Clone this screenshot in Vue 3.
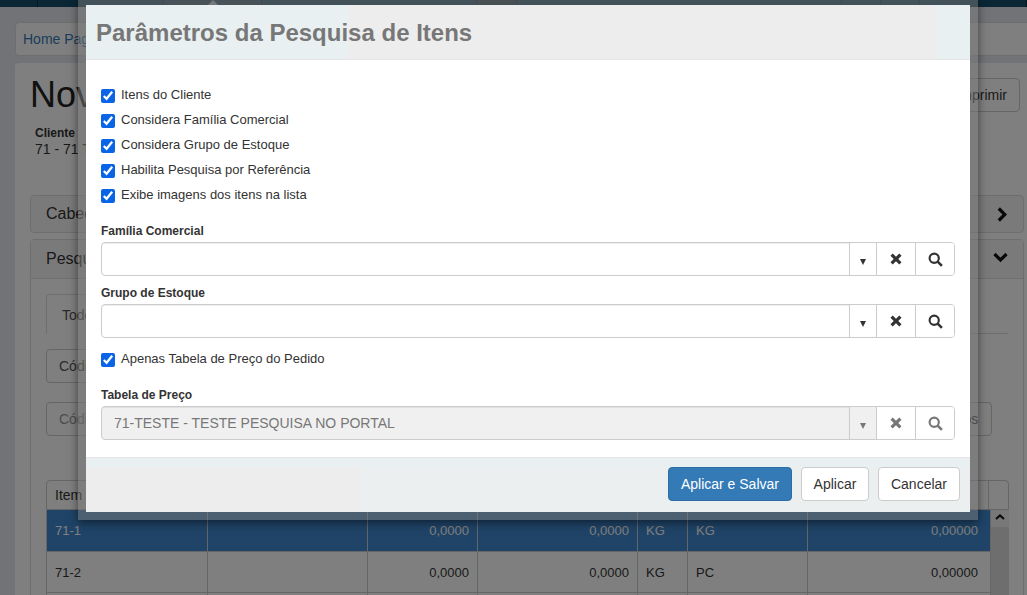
<script setup>
const nav = [
  { w: 38 }, { w: 126 }, { w: 98, active: true }, { w: 215 }, { w: 40, warm: true },
  { w: 325 }, { w: 39 }, { w: 39 }, { w: 107 }
]
const checks = [
  'Itens do Cliente',
  'Considera Família Comercial',
  'Considera Grupo de Estoque',
  'Habilita Pesquisa por Referência',
  'Exibe imagens dos itens na lista'
]
const rows = [
  { id: '71-1', a: '0,0000', b: '0,0000', un: 'KG', un2: 'KG', c: '0,00000', selected: true },
  { id: '71-2', a: '0,0000', b: '0,0000', un: 'KG', un2: 'PC', c: '0,00000' },
  { id: '71-3', a: '0,0000', b: '0,0000', un: 'KG', un2: 'KG', c: '0,00000' }
]
</script>

<template>
  <div class="page">
    <!-- pagina de fundo -->
    <nav class="topnav">
      <div v-for="(n, i) in nav" :key="i" class="nav-item" :class="{ active: n.active, warm: n.warm }" :style="{ width: n.w + 'px' }">
        <span v-if="n.active" class="nav-arrow"></span>
      </div>
    </nav>

    <div class="crumb"><a>Home Page</a></div>

    <section class="panel">
      <div class="title-row">
        <h1>Novo Pedido</h1>
        <button class="btn print">Imprimir</button>
      </div>
      <div class="client">
        <strong>Cliente</strong>
        <span>71 - 71 TESTE</span>
      </div>

      <div class="acc closed">
        <span>Cabeçalho</span>
        <svg class="chev-r" viewBox="0 0 10 15"><path d="M1.8 1.5 L7.8 7.5 L1.8 13.5" fill="none" stroke="#111" stroke-width="3.2" /></svg>
      </div>

      <div class="acc-open">
        <div class="acc-head">
          <span>Pesquisa de Itens</span>
          <svg class="chev-d" viewBox="0 0 15 11"><path d="M1.5 2 L7.5 8 L13.5 2" fill="none" stroke="#111" stroke-width="3.2" /></svg>
        </div>
        <div class="acc-body">
          <div class="tabs"><div class="tab">Todos</div></div>
          <div class="field first">Código</div>
          <div class="search-row">
            <div class="field muted">Código</div>
            <button class="btn params">Parâmetros</button>
          </div>

          <div class="grid-wrap">
            <div class="tr head">
              <div>Item</div><div></div><div></div><div></div><div></div><div></div><div></div><div></div>
            </div>
            <div class="grid-body">
              <div class="grid-rows">
                <div v-for="r in rows" :key="r.id" class="tr" :class="{ selected: r.selected }">
                  <div>{{ r.id }}</div>
                  <div></div>
                  <div class="num">{{ r.a }}</div>
                  <div class="num">{{ r.b }}</div>
                  <div>{{ r.un }}</div>
                  <div>{{ r.un2 }}</div>
                  <div class="num last">{{ r.c }}</div>
                </div>
              </div>
              <div class="scrollbar">
                <div class="scroll-up">
                  <svg viewBox="0 0 10 6" width="10" height="6"><path d="M1 5 L5 1.4 L9 5" fill="none" stroke="#111" stroke-width="2" /></svg>
                </div>
              </div>
            </div>
          </div>
        </div>
      </div>
    </section>

    <!-- modal -->
    <div class="backdrop">
      <div class="frame">
        <div class="modal">
          <header class="modal-head">
            <h2>Parâmetros da Pesquisa de Itens</h2>
          </header>

          <div class="modal-body">
            <label v-for="c in checks" :key="c" class="check">
              <input type="checkbox" checked />
              <span>{{ c }}</span>
            </label>

            <div class="lbl first-lbl">Família Comercial</div>
            <div class="combo">
              <div class="combo-input"></div>
              <div class="cell caret"><i></i></div>
              <div class="cell x">
                <svg viewBox="0 0 12 12" width="12" height="12"><path d="M1.6 1.6 L10.4 10.4 M10.4 1.6 L1.6 10.4" stroke="#333" stroke-width="3.2" /></svg>
              </div>
              <div class="cell s">
                <svg viewBox="0 0 14 14" width="15" height="15"><circle cx="5.8" cy="5.8" r="4.3" fill="none" stroke="#333" stroke-width="2" /><path d="M8.8 8.8 L13 13" stroke="#333" stroke-width="2.4" /></svg>
              </div>
            </div>

            <div class="lbl">Grupo de Estoque</div>
            <div class="combo">
              <div class="combo-input"></div>
              <div class="cell caret"><i></i></div>
              <div class="cell x">
                <svg viewBox="0 0 12 12" width="12" height="12"><path d="M1.6 1.6 L10.4 10.4 M10.4 1.6 L1.6 10.4" stroke="#333" stroke-width="3.2" /></svg>
              </div>
              <div class="cell s">
                <svg viewBox="0 0 14 14" width="15" height="15"><circle cx="5.8" cy="5.8" r="4.3" fill="none" stroke="#333" stroke-width="2" /><path d="M8.8 8.8 L13 13" stroke="#333" stroke-width="2.4" /></svg>
              </div>
            </div>

            <label class="check only-table">
              <input type="checkbox" checked />
              <span>Apenas Tabela de Preço do Pedido</span>
            </label>

            <div class="lbl table-lbl">Tabela de Preço</div>
            <div class="combo disabled">
              <div class="combo-input">71-TESTE - TESTE PESQUISA NO PORTAL</div>
              <div class="cell caret"><i></i></div>
              <div class="cell x">
                <svg viewBox="0 0 12 12" width="12" height="12"><path d="M1.6 1.6 L10.4 10.4 M10.4 1.6 L1.6 10.4" stroke="#777" stroke-width="3.2" /></svg>
              </div>
              <div class="cell s">
                <svg viewBox="0 0 14 14" width="15" height="15"><circle cx="5.8" cy="5.8" r="4.3" fill="none" stroke="#777" stroke-width="2" /><path d="M8.8 8.8 L13 13" stroke="#777" stroke-width="2.4" /></svg>
              </div>
            </div>
          </div>

          <footer class="modal-foot">
            <button class="btn primary">Aplicar e Salvar</button>
            <button class="btn apply">Aplicar</button>
            <button class="btn">Cancelar</button>
          </footer>
        </div>
      </div>
    </div>
  </div>
</template>

<style>
html, body { margin: 0; overflow: hidden; }
</style>

<style scoped>
.page {
  position: relative; width: 1027px; height: 595px; overflow: hidden;
  background: #e2e6ec; color: #333;
  font-family: "Liberation Sans", Arial, sans-serif; font-size: 14px;
}
* { box-sizing: border-box; }

.topnav { display: flex; height: 7px; background: #174f6b; }
.nav-item { position: relative; height: 7px; border-right: 1px solid #0d2f42; flex: none; }
.nav-item.active { background: #26556e; }
.nav-item.warm { background: #2b4a5a; }
.nav-arrow {
  position: absolute; left: 44px; top: 0; width: 0; height: 0;
  border-left: 5px solid transparent; border-right: 5px solid transparent; border-bottom: 5px solid #e2e6ec;
}

.crumb {
  width: 1100px; height: 34px; margin: 15px 0 7px 15px; padding: 7px;
  background: #fff; border: 1px solid #ddd; border-radius: 4px; line-height: 18px;
}
.crumb a { color: #337ab7; }

.panel {
  width: 1024px; margin-left: 15px; padding: 15px; height: 560px;
  background: #fff; border-radius: 4px;
}
.title-row { display: flex; justify-content: space-between; align-items: flex-start; height: 47px; }
h1 { margin: 0; font-size: 36px; font-weight: 400; line-height: 34px; color: #222; }
.btn.print { margin-right: 4px; width: 90px; height: 34px; text-align: right; }
.client { display: flex; flex-direction: column; height: 31px; padding-left: 5px; line-height: 16px; }
.client strong { font-size: 12px; }
.acc {
  display: flex; justify-content: space-between; align-items: center;
  height: 38px; margin-top: 39px; padding: 0 15px;
  background: #f5f5f5; border: 1px solid #ddd; border-radius: 4px; font-size: 16px;
}
.chev-r { width: 10px; height: 15px; margin-right: 1px; }
.acc-open { margin-top: 6px; border: 1px solid #ddd; border-radius: 4px; height: 400px; }
.acc-head {
  display: flex; justify-content: space-between; align-items: center;
  height: 39px; padding: 0 15px; background: #f5f5f5; border-bottom: 1px solid #ddd; font-size: 16px;
}
.chev-d { width: 15px; height: 11px; margin-top: -3px; }
.acc-body { padding: 15px; }
.tabs { height: 40px; border-bottom: 1px solid #ddd; }
.tab { width: 80px; height: 40px; padding: 11px 15px; line-height: 18px; color: #555; background: #fff; border: 1px solid #ddd; border-bottom-color: #fff; border-radius: 4px 4px 0 0; }
.field { width: 500px; height: 34px; padding: 7px 12px; line-height: 18px; border: 1px solid #ccc; border-radius: 4px; color: #555; background: #fff; }
.field.first { margin-top: 15px; }
.field.muted { color: #999; }
.search-row { display: flex; justify-content: space-between; margin-top: 19px; padding-right: 16px; }
.params { width: 100px; height: 34px; }

.grid-wrap { margin-top: 44px; width: 963px; border-radius: 4px 4px 0 0; font-size: 13px; }
.tr { display: grid; grid-template-columns: 161px 160px 110px 160px 50px 120px 183px; height: 41px; border-bottom: 1px solid #ccc; }
.tr > div { padding: 12px 8px 0; line-height: 17px; border-right: 1px solid #ccc; }
.tr.head { grid-template-columns: 161px 160px 110px 160px 50px 120px 181px 21px; height: 30px; border-top: 1px solid #ccc; border-left: 1px solid #ccc; border-right: 1px solid #ccc; border-radius: 4px 4px 0 0; font-size: 14px; }
.tr.head > div { padding: 5px 8px; line-height: 18px; }
.tr.head > div:last-child { border-right: 0; }
.tr.selected { height: 42px; background: #3f88d0; color: #fff; }
.tr.selected > div { border-right-color: #ccc; }
.num { text-align: right; }
.tr > .num.last { padding-right: 12px; }
.grid-body { display: flex; border-left: 1px solid #ccc; }
.grid-rows { width: 944px; flex: none; }
.scrollbar { width: 18px; height: 140px; background: #dcdcdc; }
.scroll-up { height: 17px; background: #f1f1f1; display: flex; justify-content: center; padding-top: 4px; }
.scroll-up svg { display: block; }

.backdrop { position: absolute; inset: 0; background: rgba(0, 0, 0, .5); }
.frame {
  position: absolute; left: 78px; top: -3px; width: 900px; padding: 8px;
  background: rgba(124, 124, 124, .5); box-shadow: 0 3px 9px rgba(0, 0, 0, .5);
}
.modal { background: #fff; height: 507px; display: flex; flex-direction: column; }
.modal-head {
  height: 55px; padding: 2px 10px 0; display: flex; align-items: center;
  background: linear-gradient(90deg, #e9f0f1 0 262px, #ededed 262px 850px, #e9f0f1 850px);
  border-bottom: 1px solid #e5e5e5;
}
h2 { margin: 0; font-size: 24px; line-height: 26px; font-weight: 700; color: #777; }

.modal-body { flex: 1; padding: 24px 15px 0; }
.check { display: flex; align-items: flex-start; height: 25px; line-height: 22px; font-size: 13px; }
.check input { width: 14px; height: 14px; margin: 5px 6px 0 0; accent-color: #0a64e6; flex: none; }
.check.only-table { height: 20px; margin-top: 10px; }
.lbl { height: 20px; line-height: 20px; margin-top: 7px; margin-bottom: 1px; font-size: 12px; font-weight: 700; }
.first-lbl { margin-top: 12px; }
.table-lbl { margin-top: 17px; }

.combo { display: flex; height: 34px; border: 1px solid #ccc; border-radius: 4px; overflow: hidden; }
.combo-input { flex: 1; padding: 7px 12px; line-height: 18px; box-shadow: inset 0 1px 1px rgba(0, 0, 0, .075); }
.cell { display: flex; align-items: center; justify-content: center; flex: none; border-left: 1px solid #ccc; background: #fff; }
.caret { width: 27px; }
.caret i { display: block; margin-top: 5px; width: 0; height: 0; border-left: 3.5px solid transparent; border-right: 3.5px solid transparent; border-top: 6px solid #333; }
.x { width: 39px; }
.s { width: 39px; }
.combo.disabled { background: #f0f0f0; color: #777; }
.combo.disabled .caret { background: #f0f0f0; }
.combo.disabled .caret i { border-top-color: #777; }

.modal-foot {
  height: 55px; padding: 9px 10px 0; display: flex; justify-content: flex-end; gap: 9px;
  background: linear-gradient(90deg, #ededed 0 274px, #ebeff0 274px) no-repeat 0 9px, #e9f0f1;
  border-top: 1px solid #e5e5e5;
}
.btn {
  height: 34px; padding: 0 12px; font: 14px "Liberation Sans", Arial, sans-serif; color: #333;
  background: #fff; border: 1px solid #ccc; border-radius: 4px;
}
.btn.apply { width: 68px; padding: 0; }
.btn.primary { color: #fff; background: #337ab7; border-color: #2e6da4; }
</style>
